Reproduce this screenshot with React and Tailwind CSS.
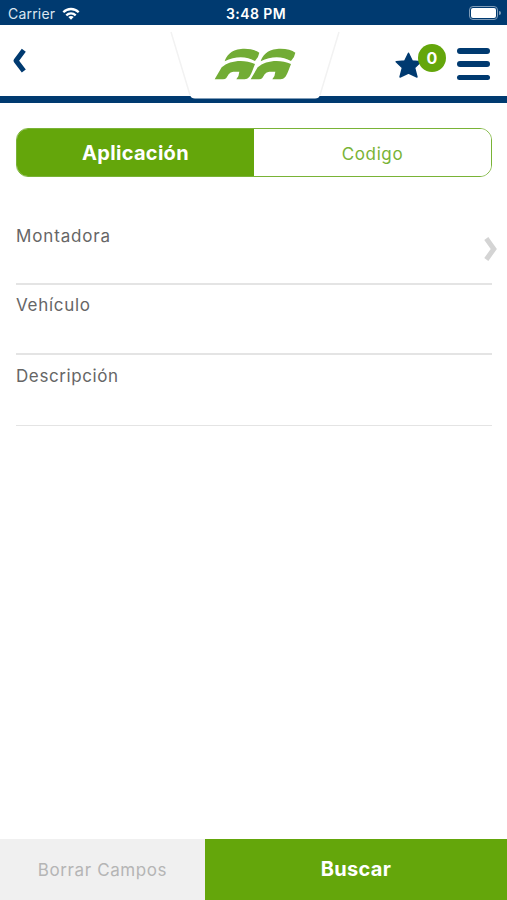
import { useState } from "react";

const TABS = [
  { id: "aplicacion", label: "Aplicación" },
  { id: "codigo", label: "Codigo" },
];

function WifiIcon() {
  return (
    <svg width="18" height="14" viewBox="0 0 18 14" fill="none" stroke="white" strokeWidth="2.3">
      <path d="M1.3 5.2 C5.6 0.9 12.4 0.9 16.7 5.2" />
      <path d="M4.3 8.3 C7 5.7 11 5.7 13.7 8.3" />
      <path d="M9 12.8 L6.3 10.1 C7.8 8.7 10.2 8.7 11.7 10.1 Z" fill="white" stroke="none" />
    </svg>
  );
}

function StatusBar() {
  return (
    <div className="grid h-[25px] grid-cols-3 items-center bg-[#003a70] pt-[2px] pr-[6px] pl-2 text-white">
      <div className="flex items-center gap-[7px]">
        <span className="text-[14px] leading-none tracking-[0.2px] text-[#dbe6f0]">Carrier</span>
        <WifiIcon />
      </div>
      <span className="pl-[3px] text-center text-[14px] leading-none font-semibold tracking-[0.4px]">3:48 PM</span>
      <div className="-mt-[1px] flex items-center justify-end gap-px">
        <div className="h-[14px] w-[29px] rounded-[4px] border border-[#7f9cb8] p-px">
          <div className="h-full rounded-[2px] bg-white" />
        </div>
        <div className="h-[4px] w-[2px] rounded-r-full bg-[#7f9cb8]" />
      </div>
    </div>
  );
}

// Half of the mark: a roof arc over a leg shape
function LogoMark() {
  return (
    <>
      <path d="M59 64 C64 48 78 29 108 27 C132 25 152 30 163 38 Q161 52 150 63 C126 49 92 47 59 64 Z" />
      <path d="M29 118 L50 82 C74 60 118 57 150 72 C144 87 139 104 132 112 Q127 118 119 118 L94 118 Q102 110 103 95 L85 95 Q76 96 71 103 L64 114 Q61 118 54 118 Z" />
    </>
  );
}

function Logo() {
  return (
    <svg width="170" height="74" viewBox="0 0 170 74" className="absolute top-0 left-[170px]">
      <path d="M0 0 L20 70 Q21 73.500 25 73.500 L145 73.500 Q149 73.500 150 70 L170 0 Z" fill="white" />
      <path d="M1 7 L20 70 M169 7 L150 70" stroke="#f2f2f2" strokeWidth="1.5" />
      <g transform="translate(35 15) scale(0.3333)" fill="#72ac35">
        <LogoMark />
        <g transform="translate(108 0)">
          <LogoMark />
        </g>
      </g>
    </svg>
  );
}

function Header() {
  return (
    <header className="relative flex h-[78px] items-start justify-between border-b-[7px] border-[#003a70] bg-white">
      <button className="mt-[22px] ml-[12px]">
        <svg width="15" height="28" viewBox="0 0 15 28" fill="none" stroke="#003a70" strokeWidth="5" strokeLinejoin="round">
          <path d="M11.800 3.300 L4 13.800 L11.800 24" />
        </svg>
      </button>
      <Logo />
      <div className="mr-[17px] flex items-start">
        <button className="relative mt-[26px] mr-[35px]">
          <svg width="27" height="28" viewBox="0 0 28 28" fill="#003a70" stroke="#003a70" strokeWidth="1.500" strokeLinejoin="round">
            <path d="M14 1.800 L17.800 9.700 L26.800 10.700 L20.300 16.900 L22.800 26.500 L14 22.300 L5.200 26.500 L7.700 16.900 L1.200 10.700 L10.200 9.700 Z" />
          </svg>
          <span className="absolute -top-[7px] left-[23px] flex h-[28px] w-[28px] items-center justify-center rounded-full bg-[#64a60b] pb-px text-[16px] font-bold text-white">
            0
          </span>
        </button>
        <button className="mt-[23px] flex flex-col gap-[7.5px]">
          <span className="h-[5.5px] w-[33px] rounded-full bg-[#003a70]" />
          <span className="h-[6px] w-[33px] rounded-full bg-[#003a70]" />
          <span className="h-[5.5px] w-[33px] rounded-full bg-[#003a70]" />
        </button>
      </div>
    </header>
  );
}

function Tabs({ active, onChange }) {
  return (
    <div className="grid h-[49px] grid-cols-2 overflow-hidden rounded-[12px] border-[1.5px] border-[#79b336]">
      {TABS.map((tab) => (
        <button
          key={tab.id}
          onClick={() => onChange(tab.id)}
          className={
            active === tab.id
              ? "bg-[#64a60b] pt-px text-[20px] font-bold tracking-[0.3px] text-white"
              : "bg-white pt-[4px] text-[17px] tracking-[0.6px] text-[#79b336]"
          }
        >
          {tab.label}
        </button>
      ))}
    </div>
  );
}

function Field({ label, className, arrow }) {
  return (
    <div className={`flex justify-between border-[#e4e4e4] text-[17px] leading-[24px] text-[#666] ${className}`}>
      <span>{label}</span>
      {arrow && (
        <svg width="15" height="26" viewBox="0 0 15 26" fill="none" stroke="#d4d4d4" strokeWidth="5" className="mt-[12px] -mr-[6px]">
          <path d="M3.300 2.500 L10.800 13 L3.300 23.500" />
        </svg>
      )}
    </div>
  );
}

export default function App() {
  const [tab, setTab] = useState("aplicacion");

  return (
    <div className="flex h-[900px] w-[507px] flex-col overflow-hidden bg-white font-['Inter',sans-serif]">
      <StatusBar />
      <Header />

      <main className="flex-1 pt-[25px] pr-[15px] pl-4">
        <Tabs active={tab} onChange={setTab} />
        <div className="mt-[47px]">
          <Field label="Montadora" className="h-[61px] border-b-2 tracking-[0.85px]" arrow />
          <Field label="Vehículo" className="h-[70px] border-b-2 pt-[8px] tracking-[0.7px]" />
          <Field label="Descripción" className="h-[71px] border-b pt-[9px] tracking-[0.6px]" />
        </div>
      </main>

      <footer className="flex h-[61px]">
        <button className="w-[205px] bg-[#f0f0f0] pt-[2px] text-[17px] tracking-[0.6px] text-[#b5b5b5]">Borrar Campos</button>
        <button className="flex-1 bg-[#64a60b] pb-px text-[20px] font-bold tracking-[0.3px] text-white">Buscar</button>
      </footer>
    </div>
  );
}
